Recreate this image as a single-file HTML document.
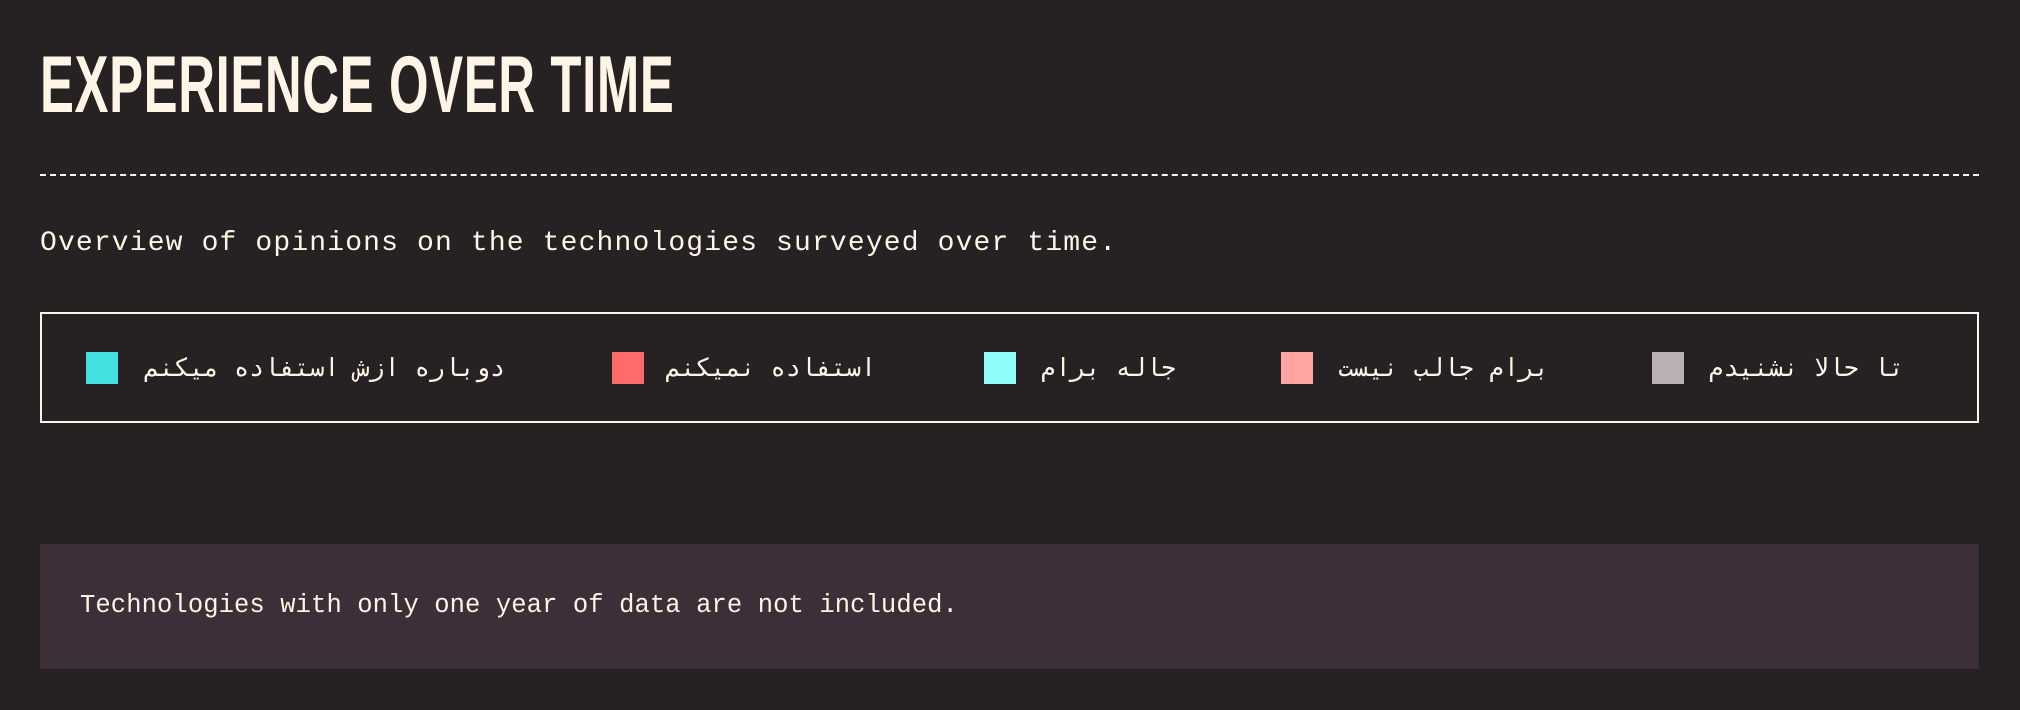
<!DOCTYPE html>
<html><head><meta charset="utf-8"><style>
body{margin:0;width:2020px;height:710px;background:#262223;color:#fff5e6;position:relative;overflow:hidden;font-family:"Liberation Mono","DejaVu Sans Mono",monospace}
.t{position:absolute;left:40px;top:45px;font:bold 81px/1 "Liberation Sans",sans-serif;transform:scaleX(0.628);transform-origin:0 0;white-space:nowrap;letter-spacing:1px}
.hr{position:absolute;left:40px;width:1939px;top:174px;border-top:2px dashed #fff5e6}
.sub{position:absolute;left:40px;top:228px;font-size:28px;letter-spacing:1.15px;white-space:nowrap}
.box{position:absolute;left:40px;top:312px;width:1935px;height:107px;border:2px solid #fff5e6}
.sw{position:absolute;top:352px;width:32px;height:32px}
.lt{position:absolute;top:352px;height:32px;line-height:32px;font-size:25px;font-family:"DejaVu Sans Mono","DejaVu Sans",monospace;white-space:nowrap;direction:rtl;letter-spacing:3px}
.note{position:absolute;left:40px;top:544px;width:1939px;height:125px;background:#3d2f37}
.nt{position:absolute;left:80px;top:591px;font-size:25.5px;letter-spacing:0.1px;white-space:nowrap}
</style></head><body>
<div class="t">EXPERIENCE OVER TIME</div>
<div class="hr"></div>
<div class="sub">Overview of opinions on the technologies surveyed over time.</div>
<div class="box"></div>
<div class="sw" style="left:86px;background:#43e0e0"></div><div class="lt" style="left:142px;width:363px">دوباره ازش استفاده میکنم</div>
<div class="sw" style="left:612px;background:#ff6b6b"></div><div class="lt" style="left:668px;width:208px">استفاده نمیکنم</div>
<div class="sw" style="left:984px;background:#8ffcfc"></div><div class="lt" style="left:1040px;width:136px">جاله برام</div>
<div class="sw" style="left:1281px;background:#ffa3a3"></div><div class="lt" style="left:1331px;width:218px">برام جالب نیست</div>
<div class="sw" style="left:1652px;background:#b9b0b3"></div><div class="lt" style="left:1708px;width:196px">تا حالا نشنیدم</div>
<div class="note"></div>
<div class="nt">Technologies with only one year of data are not included.</div>
</body></html>
